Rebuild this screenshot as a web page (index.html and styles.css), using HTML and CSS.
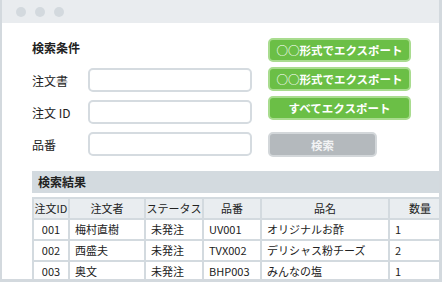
FILE: index.html
```html
<!DOCTYPE html>
<html lang="ja">
<head>
<meta charset="utf-8">
<title>検索</title>
<link rel="stylesheet" href="styles.css">
</head>
<body>
<div class="window">
  <div class="titlebar">
    <span class="dot"></span><span class="dot"></span><span class="dot"></span>
  </div>
  <div class="content">
    <div class="search">
      <div class="form">
        <div class="form-title">検索条件</div>
        <div class="field"><span class="label">注文書</span><div class="input"></div></div>
        <div class="field"><span class="label">注文 ID</span><div class="input"></div></div>
        <div class="field"><span class="label">品番</span><div class="input"></div></div>
      </div>
      <div class="actions">
        <button class="btn btn-green">○○形式でエクスポート</button>
        <button class="btn btn-green">○○形式でエクスポート</button>
        <button class="btn btn-green">すべてエクスポート</button>
        <button class="btn btn-grey">検索</button>
      </div>
    </div>
    <section class="results">
      <div class="results-title">検索結果</div>
      <table class="grid">
        <colgroup>
          <col class="c-id"><col class="c-who"><col class="c-status"><col class="c-code"><col class="c-name"><col class="c-qty">
        </colgroup>
        <thead>
          <tr><th>注文ID</th><th>注文者</th><th>ステータス</th><th>品番</th><th>品名</th><th>数量</th></tr>
        </thead>
        <tbody>
          <tr><td class="num">001</td><td>梅村直樹</td><td>未発注</td><td>UV001</td><td>オリジナルお酢</td><td>1</td></tr>
          <tr><td class="num">002</td><td>西盛夫</td><td>未発注</td><td>TVX002</td><td>デリシャス粉チーズ</td><td>2</td></tr>
          <tr><td class="num">003</td><td>奥文</td><td>未発注</td><td>BHP003</td><td>みんなの塩</td><td>1</td></tr>
        </tbody>
      </table>
    </section>
  </div>
</div>
</body>
</html>
```

FILE: styles.css
```css
* { box-sizing: border-box; }
html, body { margin: 0; padding: 0; background: #fff; }
body {
  font-family: "Noto Sans CJK JP", "Noto Sans", sans-serif;
  color: #222;
}
.window {
  width: 442px;
  height: 282px;
  border-left: 2px solid #d3d9de;
  border-right: 3px solid #d3d9de;
  border-bottom: 3px solid #d3d9de;
  overflow: hidden;
  background: #fff;
}
.titlebar {
  height: 23px;
  background: #e9ecef;
  display: flex;
  align-items: center;
  gap: 9px;
  padding-left: 14px;
}
.dot {
  width: 10px;
  height: 10px;
  border-radius: 50%;
  background: #d3d9de;
}
.content {
  padding: 13px 0 0 30px;
}
.search {
  display: flex;
  align-items: flex-start;
}
.form {
  width: 220px;
  display: flex;
  flex-direction: column;
  gap: 8px;
}
.form-title {
  height: 24px;
  line-height: 24px;
  font-size: 12px;
  font-weight: bold;
}
.field {
  display: flex;
  align-items: center;
  height: 24px;
}
.label {
  width: 56px;
  font-size: 12px;
}
.input {
  width: 164px;
  height: 24px;
  border: 2px solid #d5dbe0;
  border-radius: 5px;
  background: #fff;
}
.actions {
  margin-left: 16px;
  padding-top: 2px;
  display: flex;
  flex-direction: column;
  gap: 5px;
  width: 143px;
}
.btn {
  font-family: inherit;
  font-size: 11.5px;
  font-weight: bold;
  color: #fff;
  height: 24px;
  padding: 0;
  border-radius: 5px;
  line-height: 20px;
}
.btn-green {
  background: #6bbf46;
  border: 2px solid #a9dc8f;
}
.btn-grey {
  margin-top: 7px;
  width: 109px;
  height: 25px;
  background: #b4b9bd;
  border: 2px solid #d3d7da;
  color: #f2f3f4;
}
.results {
  margin-top: 14px;
  width: 430px;
}
.results-title {
  height: 22px;
  line-height: 22px;
  background: #d3dadf;
  padding-left: 6px;
  font-size: 12px;
  font-weight: bold;
}
.grid {
  margin-top: 4px;
  table-layout: fixed;
  width: 420px;
  border-collapse: separate;
  border-spacing: 2px;
  background: #d3dadf;
  font-size: 11px;
}
.c-id { width: 34px; }
.c-who { width: 74px; }
.c-status { width: 56px; }
.c-code { width: 56px; }
.c-name { width: 126px; }
.c-qty { width: 60px; }
.grid th, .grid td {
  height: 19px;
  line-height: 19px;
  padding: 0 0 0 5px;
  white-space: nowrap;
  overflow: hidden;
}
.grid th {
  background: #e9edf0;
  font-weight: normal;
  text-align: center;
  padding: 0;
}
.grid td {
  background: #fff;
  text-align: left;
}
.grid td.num {
  text-align: center;
  padding: 0;
}
```
